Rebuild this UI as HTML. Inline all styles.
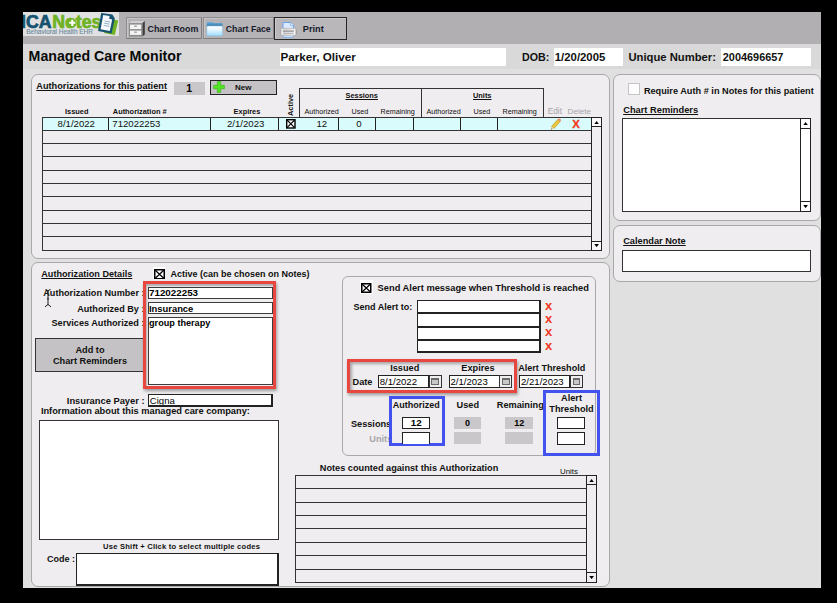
<!DOCTYPE html>
<html>
<head>
<meta charset="utf-8">
<title>Managed Care Monitor</title>
<style>
*{box-sizing:border-box;margin:0;padding:0}
html,body{width:837px;height:603px;overflow:hidden;background:#000}
body{font-family:"Liberation Sans",sans-serif;color:#000;position:relative}
.a{position:absolute}
.t{position:absolute;white-space:nowrap;font-weight:bold;font-size:9px;line-height:10px;color:#111}
.r{font-weight:normal}
.u{text-decoration:underline}
.gb{position:absolute;background:#efedef;border:1px solid #a9a7a9;border-radius:7px}
.w{position:absolute;background:#fff}
.in{position:absolute;background:#fff;border:1px solid #222;border-right-width:2px;border-bottom-width:2px;font-weight:bold;font-size:9.8px;line-height:10px;white-space:nowrap;overflow:hidden;padding-left:0}
.fld{position:absolute;background:#fff;border:1px solid #333}
.row{position:absolute;left:0;right:0;border-top:1px solid #333;height:0}
.vs{position:absolute;width:1px;background:#222}
.g{position:absolute;background:#c9c7c9;font-weight:bold;font-size:9px;line-height:12px;text-align:center}
.sb{position:absolute;background:#fff;border:1px solid #222}
.sbb{position:absolute;left:-1px;right:-1px;height:9px;border:1px solid #222;background:#f4f4f4}
.cb{position:absolute;border:1.5px solid #000;background:#fff}
</style>
</head>
<body>
<!-- app background -->
<div class="a" id="app" style="left:23px;top:12px;width:798px;height:575.6px;background:#e0e0e0;overflow:hidden">
<div class="a" id="pg" style="left:-23px;top:-12px;width:837px;height:603px">

<!-- toolbar -->
<div class="a" style="left:23px;top:12px;width:798px;height:31.5px;background:#b1afb1"></div>
<!-- title band -->
<div class="a" style="left:23px;top:43.5px;width:798px;height:25px;background:#d9d9d9"></div>

<!-- logo -->
<div class="a" style="left:23px;top:12px;width:96px;height:24px;background:#e1e1e1;overflow:hidden">
<svg class="a" style="left:0;top:0" width="96" height="24" viewBox="23 12 96 24">
 <text x="21" y="27.6" font-family="Liberation Sans" font-weight="bold" font-size="17.7" fill="#15526f" stroke="#15526f" stroke-width=".7">ICA</text>
 <text x="52.2" y="27.6" font-family="Liberation Sans" font-weight="bold" font-size="17.7" fill="#6fb224" stroke="#6fb224" stroke-width=".7">Notes</text>
 <circle cx="72.3" cy="22.8" r="4.4" fill="#6fb224"/>
 <path d="M69.2 22.8h6.2M72.3 19.7v6.2" stroke="#fff" stroke-width="2.1"/>
 <text x="26.3" y="33.9" font-family="Liberation Sans" font-size="7.2" fill="#6f8da2" stroke="#6f8da2" stroke-width=".15" textLength="66.7" lengthAdjust="spacingAndGlyphs">Behavioral Health EHR</text>
 <!-- doc icon -->
 <path d="M108 18.4 L118.2 20.6 L114.8 35 L104 33 Z" fill="#6fb224"/>
 <path d="M101.2 13 L112.4 14.6 L114.8 18.6 L111.6 33.6 L98 31 Z" fill="#15526f"/>
 <path d="M103.2 15 L109.6 16 L109.2 18.8 L112.2 19.6 L109.8 31 L100.6 29.2 Z" fill="#f6f8fb"/>
 <path d="M104.6 21l5.4 1M104.2 23.2l5.4 1M103.8 25.4l5.4 1" stroke="#86a9c4" stroke-width=".9"/>
</svg>
</div>

<!-- toolbar buttons -->
<div class="a" style="left:125.5px;top:17.3px;width:76px;height:22px;border:1px solid #8e8c8e;border-bottom-color:#7c7a7c;border-right-color:#828082;background:#b5b3b5;box-shadow:inset 1px 1px 0 #c6c4c6"></div>
<div class="a" style="left:203px;top:17.3px;width:71px;height:22px;border:1px solid #8e8c8e;border-bottom-color:#7c7a7c;border-right-color:#828082;background:#b5b3b5;box-shadow:inset 1px 1px 0 #c6c4c6"></div>
<div class="a" style="left:274px;top:17px;width:72.5px;height:22.6px;border:1.2px solid #262626;background:#b9b7b9;box-shadow:inset 1px 1px 0 #cbc9cb"></div>
<div class="t" style="left:147.5px;top:23.6px;font-size:8.9px;color:#151a2c">Chart Room</div>
<div class="t" style="left:225.8px;top:23.6px;font-size:8.7px;color:#151a2c">Chart Face</div>
<div class="t" style="left:302.8px;top:23.6px;font-size:9.2px;color:#151a2c">Print</div>
<!-- cabinet icon -->
<svg class="a" style="left:128px;top:20px" width="18" height="18" viewBox="128 20 18 18">
 <path d="M129 23.1 L131.4 21 L144.8 21 L142.4 23.1 Z" fill="#cfcfcf"/>
 <path d="M142.4 23.1 L144.8 21 L144.8 34.4 L142.4 36.5 Z" fill="#3c3c3c"/>
 <rect x="129" y="23.1" width="13.4" height="13.4" fill="#8c8c8c"/>
 <rect x="130" y="24.6" width="11.2" height="4.5" fill="#f4f4f4"/>
 <rect x="130" y="30.6" width="11.2" height="4.3" fill="#f4f4f4"/>
 <rect x="134.4" y="25.6" width="2.4" height="1.4" fill="#9c9c9c"/>
 <rect x="134.4" y="31.5" width="2.4" height="1.4" fill="#9c9c9c"/>
</svg>
<!-- folder icon -->
<svg class="a" style="left:206px;top:21px" width="18" height="16" viewBox="206 21 18 16">
 <defs><linearGradient id="fg" x1="0" y1="0" x2="0" y2="1"><stop offset="0" stop-color="#ffffff"/><stop offset=".35" stop-color="#eaf7ff"/><stop offset="1" stop-color="#9fdcff"/></linearGradient>
 <linearGradient id="fb" x1="0" y1="0" x2="0" y2="1"><stop offset="0" stop-color="#6fb4e4"/><stop offset="1" stop-color="#2d6b96"/></linearGradient></defs>
 <path d="M206.8 23 Q206.8 21.9 207.8 21.9 L212.4 21.9 L213.4 23 L221.6 23 Q222.5 23 222.5 23.9 L222.5 27 L206.8 27 Z" fill="url(#fb)"/>
 <rect x="206.9" y="26" width="15.5" height="9.7" rx=".8" fill="url(#fg)" stroke="#7ec6f2" stroke-width=".5"/>
</svg>
<!-- printer icon -->
<svg class="a" style="left:279px;top:21px" width="19" height="18" viewBox="279 21 19 18">
 <defs><linearGradient id="pb" x1="0" y1="0" x2="1" y2="0"><stop offset="0" stop-color="#b8b8b8"/><stop offset=".12" stop-color="#f6f6f6"/><stop offset=".2" stop-color="#d2d2d2"/><stop offset=".8" stop-color="#e4e4e4"/><stop offset=".9" stop-color="#fafafa"/><stop offset="1" stop-color="#8a8a8a"/></linearGradient></defs>
 <path d="M283 22.5 L290.4 22.5 L293.4 25.3 L293.4 30 L283 30 Z" fill="#dce9fc" stroke="#5e9ff0" stroke-width=".9"/>
 <path d="M290.4 22.5 L290.4 25.3 L293.4 25.3" fill="#f4f8ff" stroke="#5e9ff0" stroke-width=".6"/>
 <rect x="283" y="33.6" width="10.4" height="3.6" rx=".8" fill="#e8f1fd" stroke="#6aa9f2" stroke-width=".9"/>
 <rect x="280.4" y="28.3" width="16.1" height="7.3" rx="2.4" fill="url(#pb)" stroke="#9a9a9a" stroke-width=".4"/>
 <rect x="282.8" y="30.6" width="11" height="1.1" fill="#8e8e8e"/>
 <rect x="282.8" y="33" width="11" height=".8" fill="#b4b4b4"/>
</svg>

<!-- header row -->
<div class="t" style="left:28.6px;top:47.8px;font-size:14.2px;line-height:16px;color:#0a0a0a">Managed Care Monitor</div>
<div class="w" style="left:280px;top:47.5px;width:226px;height:18.5px"></div>
<div class="t" style="left:280.4px;top:50.8px;font-size:11.7px;line-height:12px">Parker, Oliver</div>
<div class="t" style="left:522px;top:50.5px;font-size:10.7px;line-height:12px">DOB:</div>
<div class="w" style="left:553.5px;top:47.5px;width:69.7px;height:18.3px"></div>
<div class="t" style="left:554.8px;top:51px;font-size:11.35px;line-height:12px">1/20/2005</div>
<div class="t" style="left:628.4px;top:50.5px;font-size:11.25px;line-height:12px">Unique Number:</div>
<div class="w" style="left:721px;top:47.5px;width:89.7px;height:18.3px"></div>
<div class="t" style="left:722.8px;top:51px;font-size:10.9px;line-height:12px">2004696657</div>


<!-- ===== group box 1: Authorizations ===== -->
<div class="gb" style="left:31px;top:74px;width:579px;height:185px"></div>
<div class="t u" style="left:36.3px;top:80.5px;font-size:9.2px">Authorizations for this patient</div>
<div class="g" style="left:173.5px;top:81.5px;width:31.5px;height:13px;line-height:13px;font-size:10.4px">1</div>
<div class="a" style="left:210px;top:80px;width:66.5px;height:14.5px;border:1px solid #222;border-right-width:1.5px;border-bottom-width:1.5px;background:#c4c2c4"></div>
<svg class="a" style="left:212.5px;top:81.3px" width="12" height="12" viewBox="0 0 12 12"><path d="M4.3 .6h3.4v3.7h3.7v3.4H7.7v3.7H4.3V7.7H.6V4.3H4.3z" fill="#52e422" stroke="#36b015" stroke-width=".6"/></svg>
<div class="t" style="left:235px;top:83.2px;font-size:8px;line-height:9px">New</div>

<div class="t" style="left:65px;top:107px;font-size:7.4px;line-height:9px">Issued</div>
<div class="t" style="left:112.8px;top:107px;font-size:7.4px;line-height:9px">Authorization #</div>
<div class="t" style="left:233.6px;top:107px;font-size:7.4px;line-height:9px">Expires</div>
<div class="t" style="left:285.6px;top:115.5px;font-size:7.4px;line-height:9px;transform-origin:0 0;transform:rotate(-90deg)">Active</div>

<!-- sessions / units header boxes -->
<div class="a" style="left:299px;top:88px;width:245px;height:29.5px;border:1px solid #333;border-bottom:none"></div>
<div class="vs" style="left:421px;top:88px;height:29.5px;background:#333"></div>
<div class="t u" style="left:345.5px;top:91px;font-size:7.4px;line-height:9px">Sessions</div>
<div class="t u" style="left:473px;top:91px;font-size:7.4px;line-height:9px">Units</div>
<div class="t r" style="left:304.5px;top:107px;font-size:7.2px;line-height:9px">Authorized</div>
<div class="t r" style="left:351.5px;top:107px;font-size:7.2px;line-height:9px">Used</div>
<div class="t r" style="left:380.5px;top:107px;font-size:7.2px;line-height:9px">Remaining</div>
<div class="t r" style="left:426.5px;top:107px;font-size:7.2px;line-height:9px">Authorized</div>
<div class="t r" style="left:473.5px;top:107px;font-size:7.2px;line-height:9px">Used</div>
<div class="t r" style="left:502.5px;top:107px;font-size:7.2px;line-height:9px">Remaining</div>
<div class="t r" style="left:547.7px;top:106.7px;font-size:8.3px;line-height:9px;color:#a6a4ac">Edit</div>
<div class="t r" style="left:567.6px;top:106.7px;font-size:8.1px;line-height:9px;color:#a6a4ac">Delete</div>

<!-- table -->
<div class="a" id="tbl1" style="left:42px;top:116.7px;width:550px;height:134.2px;border:1px solid #333;background:#efedef">
 <div class="a" style="left:0;top:0;right:0;height:12.2px;background:#d9fbfb"></div>
 <div class="row" style="top:12.03px"></div><div class="row" style="top:25.36px"></div><div class="row" style="top:38.69px"></div><div class="row" style="top:52.02px"></div><div class="row" style="top:65.35px"></div><div class="row" style="top:78.68px"></div><div class="row" style="top:92.01px"></div><div class="row" style="top:105.34px"></div><div class="row" style="top:118.67px"></div>
 <div class="vs" style="left:64.8px;top:0;height:12.2px"></div>
 <div class="vs" style="left:166.8px;top:0;height:12.2px"></div>
 <div class="vs" style="left:235.3px;top:0;height:12.2px"></div>
 <div class="vs" style="left:294.5px;top:0;height:12.2px"></div>
 <div class="vs" style="left:332.0px;top:0;height:12.2px"></div>
 <div class="vs" style="left:369.7px;top:0;height:12.2px"></div>
 <div class="vs" style="left:416.7px;top:0;height:12.2px"></div>
 <div class="vs" style="left:453.9px;top:0;height:12.2px"></div>
</div>
<div class="t r" style="left:57.6px;top:118.8px;font-size:9.6px">8/1/2022</div>
<div class="t r" style="left:112.3px;top:118.8px;font-size:9.6px">712022253</div>
<div class="t r" style="left:227px;top:118.8px;font-size:9.6px">2/1/2023</div>
<div class="t r" style="left:316.5px;top:118.8px;font-size:9.6px">12</div>
<div class="t r" style="left:356.2px;top:118.8px;font-size:9.6px">0</div>
<!-- row checkbox -->
<svg class="a" style="left:285.7px;top:119.1px" width="10" height="10" viewBox="0 0 10 10"><rect x=".7" y=".7" width="8.3" height="8.3" fill="#fff" stroke="#000" stroke-width="1.4"/><path d="M1 1l7.6 7.6M8.6 1l-7.6 7.6" stroke="#000" stroke-width="1.1"/></svg>
<!-- pencil -->
<svg class="a" style="left:550px;top:118px" width="11" height="12" viewBox="550 118 11 12"><path d="M557.6 119.6 L560.2 121.6 L554 128.6 L551.4 126.6 Z" fill="#ecc33c" stroke="#b08a28" stroke-width=".5"/><path d="M557.6 119.6 L558.6 118.6 Q559.4 118.2 560.2 118.9 L560.9 119.6 Q561.2 120.4 560.2 121.6 Z" fill="#f0866a"/><path d="M551.4 126.6 L554 128.6 L550.9 129.6 Z" fill="#e8d2a0"/><path d="M550.9 129.6 L551.2 128.5 L552 129.2 Z" fill="#222"/></svg>
<div class="t" style="left:572.3px;top:119.1px;font-size:11.4px;line-height:11px;color:#f03a1e;-webkit-text-stroke:.3px #f03a1e">X</div>
<!-- scrollbar -->
<div class="sb" style="left:591px;top:116.7px;width:11px;height:134.2px;background:#f1eff1">
 <div class="sbb" style="top:-1px;height:10px;background:#fafafa"></div><div class="sbb" style="bottom:-1px;height:10px;background:#fafafa"></div>
</div>
<svg class="a" style="left:593.8px;top:120.6px" width="5.2" height="3.1" viewBox="0 0 6 4"><path d="M0 4L3 0L6 4z" fill="#000"/></svg>
<svg class="a" style="left:593.8px;top:244px" width="5.2" height="3.1" viewBox="0 0 6 4"><path d="M0 0L3 4L6 0z" fill="#000"/></svg>


<!-- ===== right panel ===== -->
<div class="gb" style="left:613px;top:74px;width:207.7px;height:147px"></div>
<div class="a" style="left:627.5px;top:83.2px;width:12.3px;height:12.3px;background:#fdfdfd;border:1px solid #c6c4c6"></div>
<div class="t" style="left:643.9px;top:85.6px;font-size:9.18px">Require Auth # in Notes for this patient</div>
<div class="t u" style="left:623.2px;top:104.5px;font-size:9.3px">Chart Reminders</div>
<div class="fld" style="left:621.5px;top:117.8px;width:189px;height:93.8px"></div>
<div class="sb" style="left:800px;top:117.8px;width:10.5px;height:93.8px">
 <div class="sbb" style="top:-1px;height:11px;background:#fff"></div><div class="sbb" style="bottom:-1px;height:10.5px;background:#fff"></div>
</div>
<svg class="a" style="left:802.8px;top:122.4px" width="5.2" height="3.1" viewBox="0 0 6 4"><path d="M0 4L3 0L6 4z" fill="#000"/></svg>
<svg class="a" style="left:802.8px;top:204.8px" width="5.2" height="3.1" viewBox="0 0 6 4"><path d="M0 0L3 4L6 0z" fill="#000"/></svg>

<div class="gb" style="left:613px;top:225.2px;width:207.7px;height:56.5px"></div>
<div class="t u" style="left:623.2px;top:236px;font-size:9.23px">Calendar Note</div>
<div class="fld" style="left:621.5px;top:249.7px;width:189px;height:22.6px"></div>


<!-- ===== group box 2: Authorization Details ===== -->
<div class="gb" style="left:31px;top:262px;width:579px;height:325.4px"></div>
<div class="t u" style="left:41.3px;top:269.3px;font-size:9.1px">Authorization Details</div>
<div class="w" style="left:152.6px;top:267.2px;width:12.6px;height:12px"></div>
<svg class="a" style="left:154px;top:268.5px" width="11" height="10.5" viewBox="0 0 11 10.5"><rect x=".75" y=".75" width="9.5" height="9" fill="#fff" stroke="#000" stroke-width="1.5"/><path d="M1 1l9 8.5M10 1l-9 8.5" stroke="#000" stroke-width="1.2"/></svg>
<div class="t" style="left:170.5px;top:269.3px;font-size:9px">Active (can be chosen on Notes)</div>

<div class="t" style="right:692.5px;top:287.6px;font-size:9.12px">Authorization Number :</div>
<div class="t" style="right:692.5px;top:304px;font-size:9.12px">Authorized By :</div>
<div class="t" style="right:692.5px;top:318px;font-size:9.15px">Services Authorized :</div>
<!-- I-beam cursor -->
<svg class="a" style="left:43px;top:288px" width="10" height="20" viewBox="43 288 10 20"><path d="M45.4 289.6 Q48 289.8 48 291.4 Q48 289.8 50.6 289.6 M48 291 V304.6 M48 304.4 L45 306.8 M48 304.4 L51 306.8 M47 298.8 H49" stroke="#1a1a1a" stroke-width="1" fill="none"/></svg>

<!-- Add to Chart Reminders button -->
<div class="a" style="left:34.8px;top:338.3px;width:111.7px;height:33.6px;background:#c4c2c4;border:1px solid #333;border-bottom-width:1.5px"></div>
<div class="t" style="left:35.5px;width:109px;text-align:center;top:344.8px;font-size:9.2px;line-height:11.3px">Add to<br>Chart Reminders</div>

<!-- red highlight box 1 -->
<div class="a" style="left:143px;top:280.6px;width:133px;height:108px;border:3px solid #e8473f;background:#efedef;box-shadow:1px 2px 3px rgba(0,0,0,.35), inset 1px 2px 2px rgba(0,0,0,.28)"></div>
<div class="in" style="left:148px;top:286.6px;width:124.7px;height:12.4px;border-color:#3c3c3c;border-right-width:1.5px;border-bottom-width:1.5px">712022253</div>
<div class="in" style="left:148px;top:301.7px;width:124.7px;height:12.8px;font-size:9.4px;border-color:#3c3c3c;border-right-width:1.5px;border-bottom-width:1.5px;line-height:11px">Insurance</div>
<div class="in" style="left:148px;top:316.5px;width:124.7px;height:68px;padding-top:0;font-size:9.15px;border-color:#3c3c3c;border-bottom-width:1.5px;border-right-width:1.5px">group therapy</div>

<div class="t" style="left:66.8px;top:396px;font-size:9.33px">Insurance Payer :</div>
<div class="in" style="left:148px;top:394.2px;width:124.6px;height:12.6px;padding-top:1px;padding-left:.8px;font-weight:normal;font-size:9.6px">Cigna</div>
<div class="t" style="left:40.9px;top:406.4px;font-size:9.28px">Information about this managed care company:</div>
<div class="fld" style="left:38.5px;top:419.5px;width:240.5px;height:120.8px"></div>
<div class="t" style="left:103px;top:541.5px;font-size:7.6px;line-height:9px;letter-spacing:.22px">Use Shift + Click to select multiple codes</div>
<div class="t" style="left:47px;top:554px;font-size:9px">Code :</div>
<div class="in" style="left:76.2px;top:553px;width:203px;height:33px"></div>


<!-- ===== alert inner box ===== -->
<div class="a" style="left:341.5px;top:276px;width:254.5px;height:179.5px;border:1px solid #aaa8aa;border-radius:6px;background:#efedef"></div>
<div class="w" style="left:359.7px;top:280.4px;width:13.4px;height:14px"></div>
<svg class="a" style="left:361.2px;top:282.6px" width="10.5" height="10" viewBox="0 0 10.5 10"><rect x=".75" y=".75" width="9" height="8.5" fill="#fff" stroke="#000" stroke-width="1.5"/><path d="M1 1l8.5 8M9.5 1l-8.5 8" stroke="#000" stroke-width="1.2"/></svg>
<div class="t" style="left:377.6px;top:282.6px;font-size:9.32px">Send Alert message when Threshold is reached</div>
<div class="t" style="left:353.4px;top:302.2px;font-size:9.05px">Send Alert to:</div>
<div class="in" style="left:416.5px;top:300.0px;width:124.5px;height:13.4px;border-left-width:1.5px;border-bottom-width:1px"></div><div class="t" style="left:545px;top:298.7px;font-size:13px;line-height:13px;color:#f03a26">x</div><div class="in" style="left:416.5px;top:313.3px;width:124.5px;height:13.4px;border-left-width:1.5px;border-bottom-width:1px"></div><div class="t" style="left:545px;top:312.0px;font-size:13px;line-height:13px;color:#f03a26">x</div><div class="in" style="left:416.5px;top:326.7px;width:124.5px;height:13.4px;border-left-width:1.5px;border-bottom-width:1px"></div><div class="t" style="left:545px;top:325.4px;font-size:13px;line-height:13px;color:#f03a26">x</div><div class="in" style="left:416.5px;top:340.0px;width:124.5px;height:13.3px;border-left-width:1.5px;border-bottom-width:2px"></div><div class="t" style="left:545px;top:338.7px;font-size:13px;line-height:13px;color:#f03a26">x</div>

<!-- red highlight box 2 -->
<div class="a" style="left:347px;top:359px;width:170px;height:34px;border:3px solid #e8473f;background:#efedef;box-shadow:1px 2px 3px rgba(0,0,0,.35), inset 2px 2px 3px rgba(0,0,0,.3)"></div>
<div class="t" style="left:390.2px;top:363.2px;font-size:9.2px">Issued</div>
<div class="t" style="left:461.3px;top:363.2px;font-size:9.2px">Expires</div>
<div class="t" style="left:518.2px;top:363.2px;font-size:9.09px">Alert Threshold</div>
<div class="t" style="left:352.5px;top:376.8px;font-size:9.2px">Date</div>
<div class="in r" style="left:378px;top:375.4px;width:51px;height:12.8px;padding-left:.7px;border-right-width:1px;border-bottom-width:1px;font-weight:normal;font-size:9.6px;line-height:11px">8/1/2022</div>
<div class="a" style="left:428.6px;top:375.4px;width:13px;height:12.8px;border:1px solid #333;background:#efedef"></div><div class="a" style="left:431.4px;top:378.0px;width:7.5px;height:6.5px;border:1px solid #6a6a6a;border-top-width:2px;background:#c8c8c8"></div>
<div class="in r" style="left:448.7px;top:375.4px;width:51px;height:12.8px;padding-left:.7px;border-right-width:1px;border-bottom-width:1px;font-weight:normal;font-size:9.6px;line-height:11px">2/1/2023</div>
<div class="a" style="left:499.3px;top:375.4px;width:13px;height:12.8px;border:1px solid #333;background:#efedef"></div><div class="a" style="left:502.1px;top:378.0px;width:7.5px;height:6.5px;border:1px solid #6a6a6a;border-top-width:2px;background:#c8c8c8"></div>
<div class="in r" style="left:519.3px;top:375.4px;width:51px;height:12.8px;padding-left:.7px;border-right-width:1px;border-bottom-width:1px;font-weight:normal;font-size:9.6px;line-height:11px">2/21/2023</div>
<div class="a" style="left:569.9px;top:375.4px;width:13px;height:12.8px;border:1px solid #333;background:#efedef"></div><div class="a" style="left:572.7px;top:378.0px;width:7.5px;height:6.5px;border:1px solid #6a6a6a;border-top-width:2px;background:#c8c8c8"></div>

<div class="t" style="left:456.6px;top:399.6px;font-size:9.2px">Used</div>
<div class="t" style="left:496.8px;top:399.6px;font-size:9.2px">Remaining</div>
<div class="t" style="left:350.9px;top:419px;font-size:9.2px">Sessions</div>
<div class="t" style="left:369.3px;top:433.5px;font-size:9.2px;color:#a9a7a9">Units</div>

<div class="g" style="left:453.7px;top:416.9px;width:27.8px;height:12.6px">0</div>
<div class="g" style="left:453.7px;top:432px;width:27.8px;height:11.8px"></div>
<div class="g" style="left:505.1px;top:416.9px;width:28.2px;height:12.6px">12</div>
<div class="g" style="left:505.1px;top:432px;width:28.2px;height:11.8px"></div>

<!-- blue box 1 -->
<div class="a" style="left:389px;top:396px;width:56px;height:50px;border:3px solid #4252ee"></div>
<div class="t" style="left:392.7px;top:399.6px;font-size:9.03px">Authorized</div>
<div class="in" style="left:401.9px;top:416.6px;width:28.6px;height:12.9px;border-right-width:1px;border-bottom-width:1px;text-align:center;line-height:10px">12</div>
<div class="in" style="left:401.9px;top:431.5px;width:28.6px;height:12.9px;border-right-width:1px;border-bottom-width:1px;border-bottom:none"></div>

<!-- blue box 2 -->
<div class="a" style="left:543px;top:389.8px;width:57px;height:66.4px;border:3px solid #4252ee"></div>
<div class="t" style="left:546px;width:51px;text-align:center;top:393px;font-size:9.2px;line-height:11px">Alert<br>Threshold</div>
<div class="in" style="left:557px;top:416.6px;width:28.2px;height:12.9px;border-right-width:1px;border-bottom-width:1px"></div>
<div class="in" style="left:557px;top:431.5px;width:28.2px;height:13.5px;border-right-width:1px;border-bottom-width:1px"></div>


<!-- ===== notes table ===== -->
<div class="t" style="left:319.8px;top:462.6px;font-size:9.18px">Notes counted against this Authorization</div>
<div class="t r" style="left:560px;top:466.5px;font-size:7.9px;line-height:9px">Units</div>
<div class="a" style="left:295px;top:475px;width:292px;height:108px;border:1px solid #333;background:#efedef"><div class="row" style="top:12.10px"></div><div class="row" style="top:25.50px"></div><div class="row" style="top:38.90px"></div><div class="row" style="top:52.30px"></div><div class="row" style="top:65.70px"></div><div class="row" style="top:79.10px"></div><div class="row" style="top:92.50px"></div></div>
<div class="sb" style="left:586px;top:475px;width:11px;height:108px;background:#efedef">
 <div class="sbb" style="top:-1px;height:10px;background:#efedef"></div><div class="sbb" style="bottom:-1px;height:11px;background:#efedef"></div>
</div>
<svg class="a" style="left:589px;top:478.8px" width="5.2" height="3.1" viewBox="0 0 6 4"><path d="M0 4L3 0L6 4z" fill="#000"/></svg>
<svg class="a" style="left:589px;top:576.2px" width="5.2" height="3.1" viewBox="0 0 6 4"><path d="M0 0L3 4L6 0z" fill="#000"/></svg>

</div>
</div>
</body>
</html>
